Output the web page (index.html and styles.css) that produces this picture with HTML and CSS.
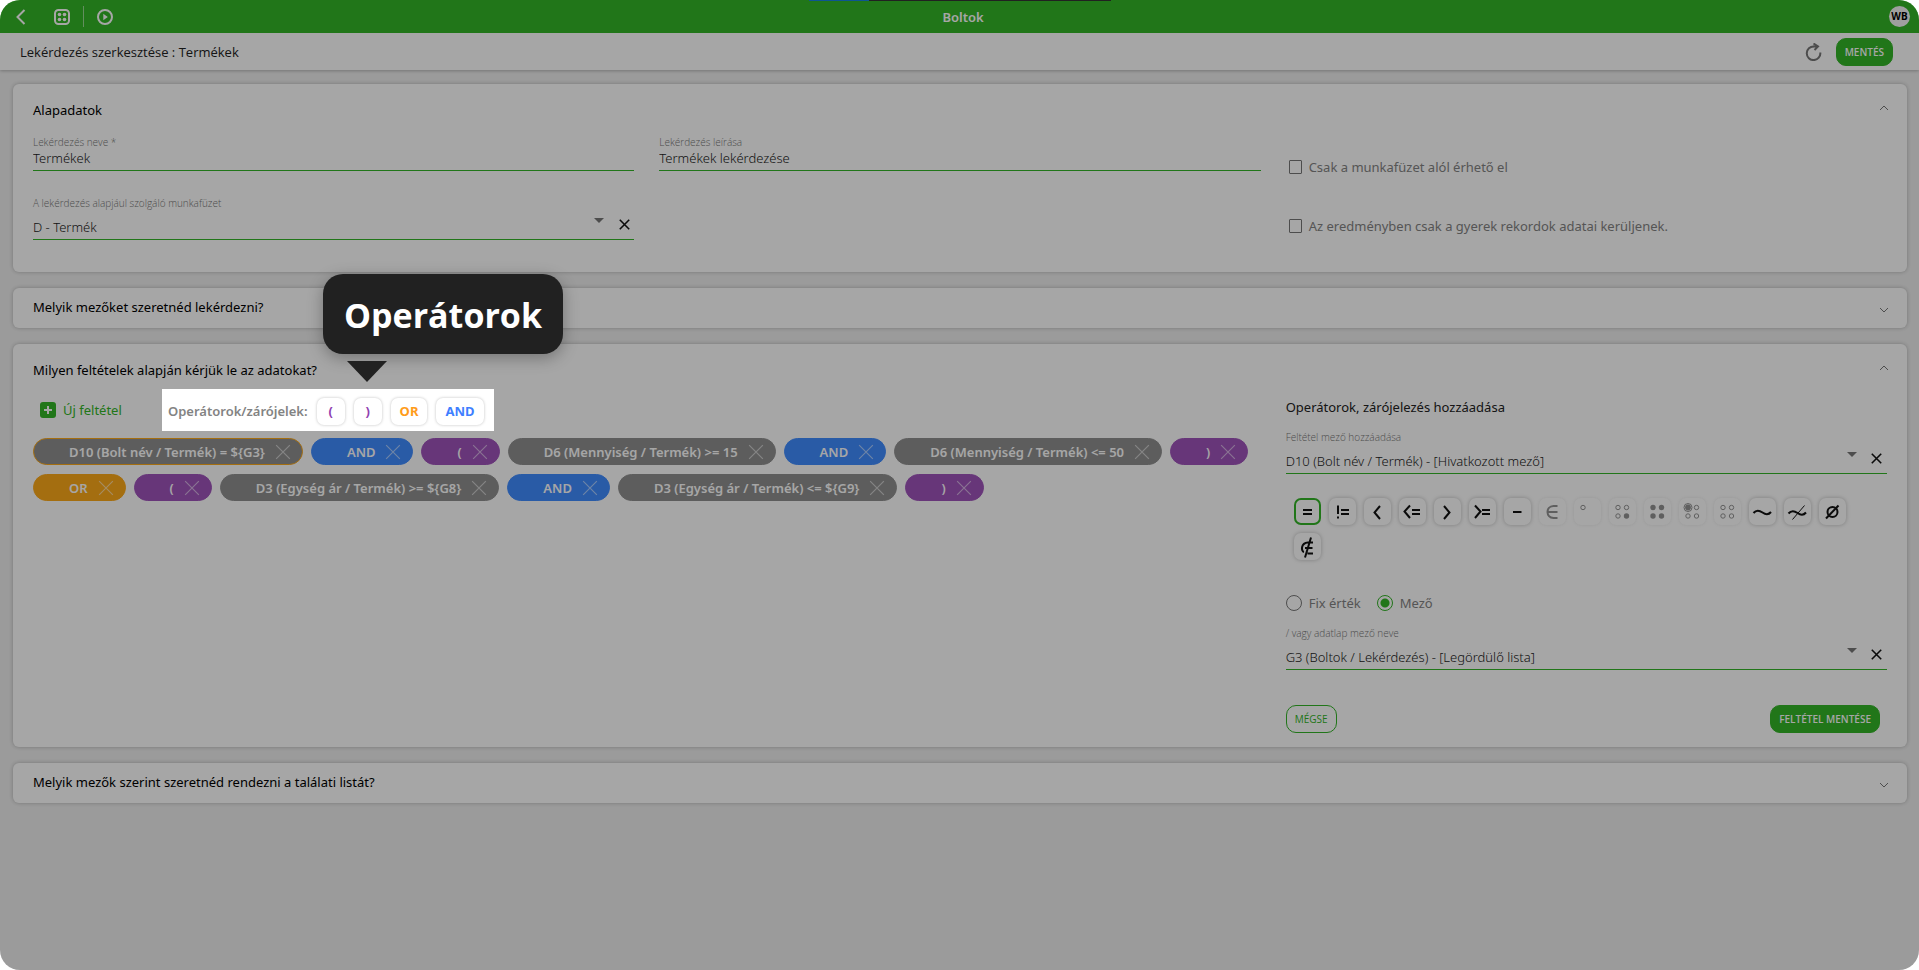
FILE: index.html
```html
<!DOCTYPE html>
<html lang="hu">
<head>
<meta charset="utf-8">
<title>Boltok</title>
<link rel="stylesheet" href="styles.css">
</head>
<body>
<svg class="sprite" aria-hidden="true">
  <symbol id="x" viewBox="0 0 14 14"><path d="M1 1L13 13M13 1L1 13"/></symbol>
  <symbol id="up" viewBox="0 0 10 6"><path d="M1 5L5 1L9 5"/></symbol>
  <symbol id="down" viewBox="0 0 10 6"><path d="M1 1L5 5L9 1"/></symbol>
  <symbol id="arrow" viewBox="0 0 10 5"><path d="M0 0H10L5 5Z"/></symbol>
</svg>
<div class="page">
  <header class="topbar">
    <nav class="topbar-nav">
      <button class="icon-btn back" aria-label="Vissza"><svg width="10" height="16" viewBox="0 0 10 16"><path d="M8.500 1L1.500 8L8.500 15"/></svg></button>
      <button class="icon-btn grid-btn" aria-label="Alkalmazások"><svg width="16" height="16" viewBox="0 0 16 16"><rect x="1" y="1" width="14" height="14" rx="3.500"/><g class="solid"><circle cx="5.500" cy="5.500" r="1.800"/><circle cx="10.500" cy="5.500" r="1.800"/><circle cx="5.500" cy="10.500" r="1.800"/><circle cx="10.500" cy="10.500" r="1.800"/></g></svg></button>
      <span class="divider"></span>
      <button class="icon-btn" aria-label="Indítás"><svg width="16" height="16" viewBox="0 0 16 16"><circle cx="8" cy="8" r="7"/><path class="solid" d="M6.300 4.800L10.800 8L6.300 11.200Z"/></svg></button>
    </nav>
    <h1 class="topbar-title">Boltok</h1>
    <button class="avatar">WB</button>
    <div class="strip"><span class="strip-value"></span></div>
  </header>

  <div class="toolbar">
    <h2 class="toolbar-title">Lekérdezés szerkesztése : Termékek</h2>
    <button class="icon-btn refresh" aria-label="Frissítés"><svg width="17" height="18" viewBox="0 0 17 18"><path d="M9 3.500A6.800 6.800 0 1 0 15.300 9.500"/><path d="M8.500 0.500L13 3.500L9.500 7M13 3.500H8.500"/></svg></button>
    <button class="btn">MENTÉS</button>
  </div>

  <main class="content">
    <section class="card">
      <div class="card-head"><h3 class="card-title">Alapadatok</h3><button class="toggle" aria-label="Bezárás"><svg width="10" height="6"><use href="#up"/></svg></button></div>
      <div class="columns basics">
        <div class="field">
          <label for="name">Lekérdezés neve *</label>
          <input id="name" type="text" value="Termékek">
        </div>
        <div class="field">
          <label for="desc">Lekérdezés leírása</label>
          <input id="desc" type="text" value="Termékek lekérdezése">
        </div>
        <div class="checks">
          <label class="check"><input type="checkbox">Csak a munkafüzet alól érhető el</label>
          <label class="check"><input type="checkbox">Az eredményben csak a gyerek rekordok adatai kerüljenek.</label>
        </div>
        <div class="field">
          <label for="book">A lekérdezés alapjául szolgáló munkafüzet</label>
          <div class="select"><select id="book"><option>D - Termék</option></select><svg class="arrow" width="10" height="5"><use href="#arrow"/></svg><button class="clear" aria-label="Törlés"><svg width="11" height="11"><use href="#x"/></svg></button></div>
        </div>
      </div>
    </section>

    <section class="card closed">
      <div class="card-head"><h3 class="card-title">Melyik mezőket szeretnéd lekérdezni?</h3><button class="toggle" aria-label="Megnyitás"><svg width="10" height="6"><use href="#down"/></svg></button></div>
    </section>

    <section class="card">
      <div class="card-head"><h3 class="card-title">Milyen feltételek alapján kérjük le az adatokat?</h3><button class="toggle" aria-label="Bezárás"><svg width="10" height="6"><use href="#up"/></svg></button></div>
      <div class="columns">
        <div class="conditions">
          <div class="actions">
            <button class="add"><svg width="16" height="16" viewBox="0 0 16 16"><rect width="16" height="16" rx="3"/><path d="M8 4V12M4 8H12"/></svg>Új feltétel</button>
            <div class="spotlight">
              <span class="spot-label">Operátorok/zárójelek:</span>
              <button class="op paren">(</button>
              <button class="op paren">)</button>
              <button class="op or">OR</button>
              <button class="op and">AND</button>
              <div class="tooltip">Operátorok</div>
            </div>
          </div>
          <div class="chips">
            <div class="chip active">D10 (Bolt név / Termék) = ${G3}<button aria-label="Törlés"><svg width="16" height="16"><use href="#x"/></svg></button></div>
            <div class="chip blue">AND<button aria-label="Törlés"><svg width="16" height="16"><use href="#x"/></svg></button></div>
            <div class="chip purple">(<button aria-label="Törlés"><svg width="16" height="16"><use href="#x"/></svg></button></div>
            <div class="chip">D6 (Mennyiség / Termék) &gt;= 15<button aria-label="Törlés"><svg width="16" height="16"><use href="#x"/></svg></button></div>
            <div class="chip blue">AND<button aria-label="Törlés"><svg width="16" height="16"><use href="#x"/></svg></button></div>
            <div class="chip">D6 (Mennyiség / Termék) &lt;= 50<button aria-label="Törlés"><svg width="16" height="16"><use href="#x"/></svg></button></div>
            <div class="chip purple">)<button aria-label="Törlés"><svg width="16" height="16"><use href="#x"/></svg></button></div>
            <div class="chip orange">OR<button aria-label="Törlés"><svg width="16" height="16"><use href="#x"/></svg></button></div>
            <div class="chip purple">(<button aria-label="Törlés"><svg width="16" height="16"><use href="#x"/></svg></button></div>
            <div class="chip">D3 (Egység ár / Termék) &gt;= ${G8}<button aria-label="Törlés"><svg width="16" height="16"><use href="#x"/></svg></button></div>
            <div class="chip blue">AND<button aria-label="Törlés"><svg width="16" height="16"><use href="#x"/></svg></button></div>
            <div class="chip">D3 (Egység ár / Termék) &lt;= ${G9}<button aria-label="Törlés"><svg width="16" height="16"><use href="#x"/></svg></button></div>
            <div class="chip purple">)<button aria-label="Törlés"><svg width="16" height="16"><use href="#x"/></svg></button></div>
          </div>
        </div>

        <div class="editor">
          <h4 class="editor-title">Operátorok, zárójelezés hozzáadása</h4>
          <div class="field">
            <label for="cond">Feltétel mező hozzáadása</label>
            <div class="select"><select id="cond"><option>D10 (Bolt név / Termék) - [Hivatkozott mező]</option></select><svg class="arrow" width="10" height="5"><use href="#arrow"/></svg><button class="clear" aria-label="Törlés"><svg width="11" height="11"><use href="#x"/></svg></button></div>
          </div>
          <div class="symbols">
            <button class="symbol selected" aria-label="egyenlő"><svg viewBox="0 0 27 27"><path d="M9 12H18M9 16H18"/></svg></button>
            <button class="symbol" aria-label="nem egyenlő"><svg viewBox="0 0 27 27"><path d="M9 7.500V16M9 18.500V20.500M12 12H20M12 16H20"/></svg></button>
            <button class="symbol" aria-label="kisebb"><svg viewBox="0 0 27 27"><path d="M16 8L10.500 14.500L16 21"/></svg></button>
            <button class="symbol" aria-label="kisebb vagy egyenlő"><svg viewBox="0 0 27 27"><path d="M11 7.500L5.500 13.500L11 20M13 12H21M13 16H21"/></svg></button>
            <button class="symbol" aria-label="nagyobb"><svg viewBox="0 0 27 27"><path d="M10 8L15.500 14.500L10 21"/></svg></button>
            <button class="symbol" aria-label="nagyobb vagy egyenlő"><svg viewBox="0 0 27 27"><path d="M6 7.500L11.500 13.500L6 20M13 12H21M13 16H21"/></svg></button>
            <button class="symbol" aria-label="tartomány"><svg viewBox="0 0 27 27"><path d="M9 14H17.500"/></svg></button>
            <button class="symbol" disabled aria-label="eleme"><svg viewBox="0 0 27 27"><path class="medium" d="M18.500 8H14.500C6.500 8.500 6.500 19.500 14.500 20H18.500M8.500 14H18.500"/></svg></button>
            <button class="symbol" disabled aria-label="egy elem"><svg viewBox="0 0 27 27"><circle cx="9" cy="9.500" r="2.200"/></svg></button>
            <button class="symbol" disabled aria-label="valamelyik"><svg viewBox="0 0 27 27"><circle cx="9" cy="9.500" r="2.200"/><circle cx="17.500" cy="9.500" r="2.200"/><circle cx="9" cy="18" r="2.200"/><circle class="solid" cx="17.500" cy="18" r="2.700"/></svg></button>
            <button class="symbol" disabled aria-label="mindegyik"><svg viewBox="0 0 27 27"><g class="solid"><circle cx="9" cy="9.500" r="2.700"/><circle cx="17.500" cy="9.500" r="2.700"/><circle cx="9" cy="18" r="2.700"/><circle cx="17.500" cy="18" r="2.700"/></g></svg></button>
            <button class="symbol" disabled aria-label="első"><svg viewBox="0 0 27 27"><circle cx="9" cy="9.500" r="4"/><circle class="solid" cx="9" cy="9.500" r="2.900"/><circle cx="17.500" cy="9.500" r="2.200"/><circle cx="9" cy="18" r="2.200"/><circle cx="17.500" cy="18" r="2.200"/></svg></button>
            <button class="symbol" disabled aria-label="egyik sem"><svg viewBox="0 0 27 27"><circle cx="9" cy="9.500" r="2.200"/><circle cx="17.500" cy="9.500" r="2.200"/><circle cx="9" cy="18" r="2.200"/><circle cx="17.500" cy="18" r="2.200"/></svg></button>
            <button class="symbol" aria-label="hasonló"><svg viewBox="0 0 27 27"><path d="M4.500 15C7 12 10 12 13.500 14.500C17 17 19.500 17 22 14"/></svg></button>
            <button class="symbol" aria-label="nem hasonló"><svg viewBox="0 0 27 27"><path d="M4.500 15.500C7 12.500 10 12.500 13.500 15C17 17.500 19.500 17.500 22 14.500"/><path class="thin" d="M8.500 21.500L20.500 7.500"/></svg></button>
            <button class="symbol" aria-label="üres"><svg viewBox="0 0 27 27"><circle cx="13.500" cy="14" r="5"/><path d="M7 20.500L19.500 7.500"/></svg></button>
            <button class="symbol" aria-label="nem eleme"><svg viewBox="0 0 27 27"><path d="M19 9.500H14C6.500 10 7 18.500 10 19M11 15H18.500M13.500 20.500H19M17 4.500L11 24.500"/></svg></button>
          </div>
          <div class="radios">
            <label class="radio"><input type="radio" name="kind">Fix érték</label>
            <label class="radio"><input type="radio" name="kind" checked>Mező</label>
          </div>
          <div class="field">
            <label for="ref">/ vagy adatlap mező neve</label>
            <div class="select"><select id="ref"><option>G3 (Boltok / Lekérdezés) - [Legördülő lista]</option></select><svg class="arrow" width="10" height="5"><use href="#arrow"/></svg><button class="clear" aria-label="Törlés"><svg width="11" height="11"><use href="#x"/></svg></button></div>
          </div>
          <div class="editor-actions">
            <button class="btn outline">MÉGSE</button>
            <button class="btn">FELTÉTEL MENTÉSE</button>
          </div>
        </div>
      </div>
    </section>

    <section class="card closed">
      <div class="card-head"><h3 class="card-title">Melyik mezők szerint szeretnéd rendezni a találati listát?</h3><button class="toggle" aria-label="Megnyitás"><svg width="10" height="6"><use href="#down"/></svg></button></div>
    </section>
  </main>
</div>
</body>
</html>
```
FILE: styles.css
```css
:root {
  --green: #33b527;
  --grey: #838383;
}
* { box-sizing: border-box; }
body {
  margin: 0;
  background: #fff;
  font-family: "Noto Sans", "Open Sans", sans-serif;
  font-size: 13px;
  line-height: 20px;
  color: #222;
}
h1, h2, h3, h4 { margin: 0; font-size: 13px; }
button, input, select { font: inherit; color: inherit; margin: 0; }
button { padding: 0; border: 0; background: none; }
svg { display: block; fill: none; stroke: currentColor; }
.solid { fill: currentColor; stroke: none; }
.sprite { position: absolute; width: 0; height: 0; }

.page {
  min-height: 100vh;
  background: #efefef;
  border-radius: 20px;
  overflow: hidden;
}

.topbar {
  position: relative;
  display: grid;
  grid-template-columns: 1fr auto 1fr;
  align-items: center;
  height: 33px;
  padding: 0 9px 0 16px;
  background: var(--green);
  color: #fff;
}
.topbar-nav { display: flex; align-items: center; }
.topbar-nav svg { stroke-width: 2; }
.back { margin-right: 28px; }
.divider { width: 1px; height: 21px; margin: 0 13px; background: rgba(255, 255, 255, .5); }
.topbar-title { font-weight: 600; }
.avatar {
  justify-self: end;
  width: 21px;
  height: 21px;
  border-radius: 50%;
  background: #f5f5f5;
  color: #000;
  font-size: 10px;
  font-weight: 700;
  line-height: 21px;
}
.strip {
  position: absolute;
  top: 0;
  left: 50%;
  width: 302px;
  height: 1px;
  margin-left: -151px;
  background: #333;
}
.strip-value { display: block; width: 60px; height: 1px; background: #1683e0; }

.toolbar {
  display: flex;
  align-items: center;
  height: 37px;
  padding: 0 26px 0 20px;
  background: #fff;
  box-shadow: 0 1px 3px rgba(0, 0, 0, .25);
}
.toolbar-title { flex: 1; font-family: "Open Sans", "Noto Sans", sans-serif; font-weight: 400; }
.refresh { margin-right: 14px; color: #777; }
.refresh svg { stroke-width: 2; }

.btn {
  height: 28px;
  padding: 0 8px;
  border: 1px solid var(--green);
  border-radius: 10px;
  background: var(--green);
  color: #fff;
  font-family: "Open Sans", "Noto Sans", sans-serif;
  font-size: 10px;
  font-weight: 600;
}
.btn.outline { background: none; color: var(--green); font-weight: 400; }

.content {
  display: flex;
  flex-direction: column;
  gap: 16px;
  padding: 14px 12px 16px 13px;
}
.card {
  padding: 0 20px 14px;
  border-radius: 6px;
  background: #fff;
  box-shadow: 0 0 4px rgba(0, 0, 0, .25);
}
.card.closed { padding-bottom: 0; }
.card-head {
  display: flex;
  align-items: center;
  justify-content: space-between;
  padding: 16px 0 9px;
}
.closed .card-head { padding: 9px 0 11px; }
.card-title { font-weight: 400; color: #000; }
.toggle { width: 10px; height: 6px; margin: 0 -2px 5px 0; color: #777; }
.closed .toggle { margin-bottom: -5px; }

.columns {
  display: grid;
  grid-template-columns: repeat(3, minmax(0, 1fr));
  column-gap: 25px;
}
.basics { row-gap: 26px; padding: 7px 0 17px; }
.card + .card { margin-top: 0; }

.field label {
  display: block;
  font-family: "Open Sans", "Noto Sans", sans-serif;
  font-size: 10px;
  font-weight: 300;
  line-height: 12px;
  color: #777;
}
.field input {
  display: block;
  width: 100%;
  height: 23px;
  padding: 0 0 2px;
  border: 0;
  border-bottom: 1px solid var(--green);
  background: none;
  font-weight: 300;
}
.select {
  display: flex;
  align-items: center;
  height: 31px;
  border-bottom: 1px solid var(--green);
}
.select select {
  flex: 1;
  height: 30px;
  padding: 5px 0 0;
  border: 0;
  background: none;
  appearance: none;
  font-weight: 300;
}
.arrow { align-self: flex-start; margin: 9px 10px 0 0; color: #777; fill: currentColor; stroke: none; }
.clear { display: flex; justify-content: center; width: 20px; color: #111; }
.clear svg { stroke-width: 2; }

.checks {
  grid-row: span 2;
  display: flex;
  flex-direction: column;
  gap: 39px;
  padding: 21px 0 0 3px;
}
.check, .radio { display: flex; align-items: center; color: var(--grey); font-weight: 400; }
.check input {
  width: 13px;
  height: 14px;
  margin-right: 7px;
  padding: 0;
  border: 1px solid #777;
  border-radius: 1px;
  appearance: none;
}

.basics { margin-bottom: 1px; }
.conditions { grid-column: span 2; }
.actions { display: flex; height: 42px; }
.add {
  display: flex;
  align-items: center;
  gap: 7px;
  width: 122px;
  padding-left: 7px;
  color: var(--green);
}
.add rect { fill: var(--green); stroke: none; }
.add path { stroke: #fff; stroke-width: 2; }

.spotlight {
  position: relative;
  z-index: 1;
  display: flex;
  align-items: center;
  gap: 9px;
  margin-left: 7px;
  padding: 2px 10px 0 6px;
  box-shadow: 0 0 0 3000px rgba(0, 0, 0, .35);
}
.spot-label { color: var(--grey); font-weight: 600; }
.op {
  height: 27px;
  min-width: 28px;
  padding: 0 9px;
  border-radius: 7px;
  box-shadow: 0 0 3px rgba(0, 0, 0, .25);
  font-weight: 700;
}
.paren { color: #9040b0; }
.or { color: #ff9c1a; }
.and { color: #3f7fff; }

.tooltip {
  position: absolute;
  left: 161px;
  bottom: 77px;
  width: 240px;
  padding-top: 2px;
  border-radius: 20px;
  background: #212121;
  box-shadow: 0 4px 16px rgba(0, 0, 0, .3);
  color: #fff;
  font-family: "Open Sans", "Noto Sans", sans-serif;
  font-size: 34px;
  font-weight: 700;
  line-height: 78px;
  text-align: center;
}
.tooltip::after {
  content: "";
  position: absolute;
  top: 87px;
  left: 24px;
  border: solid transparent;
  border-width: 21px 20px 0;
  border-top-color: #212121;
}

.chips { display: flex; flex-wrap: wrap; gap: 9px 8px; margin-top: 7px; }
.chip {
  display: flex;
  align-items: center;
  gap: 10px;
  height: 27px;
  padding: 0 11px 0 35px;
  border: 1px solid #909090;
  border-radius: 14px;
  background: #909090;
  color: #fff;
  font-weight: 600;
}
.chip svg { opacity: .55; }
.chip.active { border-color: #fca91a; }
.chip.blue { background: #408cff; border-color: #408cff; }
.chip.purple { background: #9f53bb; border-color: #9f53bb; }
.chip.orange { background: #fca91a; border-color: #fca91a; }

.editor { padding-top: 8px; }
.editor-title { margin-bottom: 14px; font-weight: 400; }
.symbols {
  display: flex;
  flex-wrap: wrap;
  gap: 8px;
  margin: 24px 0 33px;
  padding: 0 8px;
}
.symbol {
  width: 27px;
  height: 27px;
  border-radius: 7px;
  box-shadow: 0 0 4px rgba(0, 0, 0, .25);
  color: #111;
}
.symbol svg { stroke-width: 2; }
.symbol.selected { box-shadow: inset 0 0 0 2px var(--green); }
.symbol:disabled { opacity: .45; box-shadow: 0 0 3px rgba(0, 0, 0, .2); }
.symbol:disabled svg { stroke-width: 1; }
.symbol .medium { stroke-width: 2; }
.symbol .thin { stroke-width: 1; }

.radios { display: flex; gap: 16px; margin-bottom: 14px; }
.radio input {
  width: 16px;
  height: 16px;
  margin-right: 7px;
  border: 1px solid #777;
  border-radius: 50%;
  appearance: none;
}
.radio input:checked {
  border-color: var(--green);
  background: radial-gradient(circle, var(--green) 4px, transparent 5px);
}
.editor-actions {
  display: flex;
  justify-content: space-between;
  margin-top: 35px;
  padding-right: 7px;
}
```
